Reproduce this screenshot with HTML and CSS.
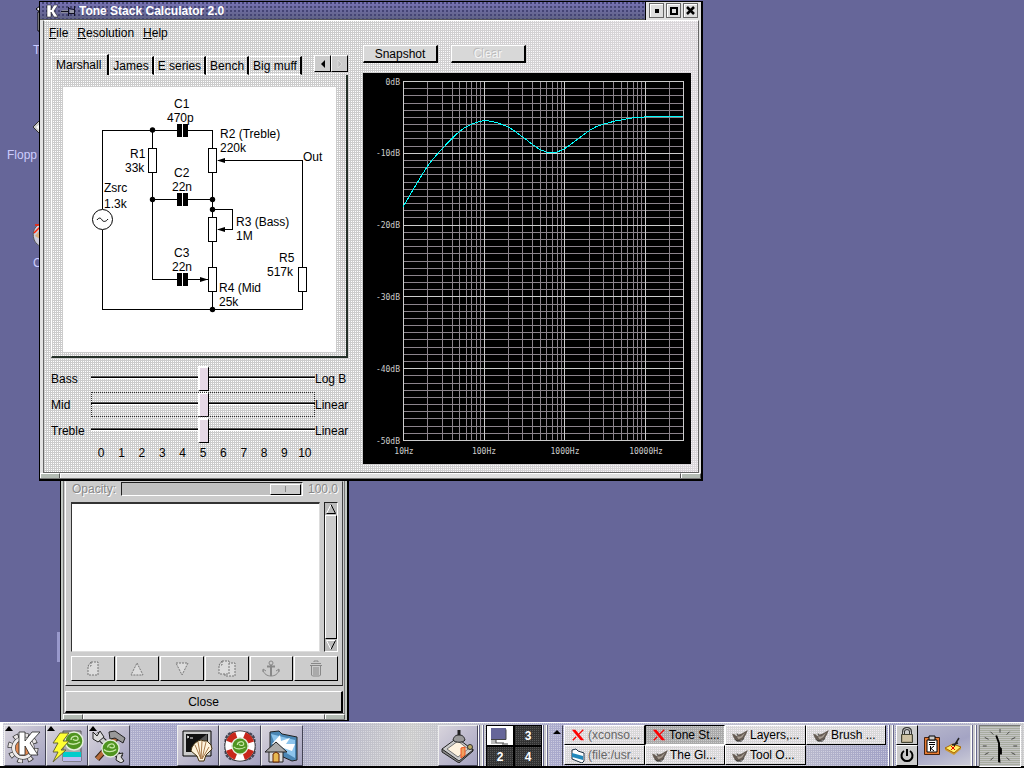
FILE: index.html
```html
<!DOCTYPE html>
<html lang="en">
<head>
<meta charset="utf-8">
<title>Tone Stack Calculator 2.0</title>
<link rel="stylesheet" href="styles.css">
</head>
<body>
<svg class="defs" width="0" height="0" aria-hidden="true">
  <defs>
    <symbol id="xlogo" viewBox="0 0 16 16"><path d="M1 2h4l10 12h-4z" fill="#f00"/><path d="M14 2L9 7M6 10l-4 4" stroke="#f00" stroke-width="1.5"/></symbol>
    <symbol id="gimp" viewBox="0 0 18 14"><path d="M1 5l3 1 2-2 2 2 3-1 7-4-2 5-3 5-4 2H6L3 10z" fill="#665c54"/><path d="M6 8l4 0 5-4-3 5-4 2z" fill="#a89e94"/><circle cx="6" cy="6" r="1.5" fill="#fff"/><path d="M6 5h1v2H6z" fill="#000"/><path d="M4 11l2 2h5l3-3" stroke="#222" fill="none"/></symbol>
    <symbol id="lizard" viewBox="0 0 20 20"><circle cx="10" cy="10" r="9" fill="#4f9420" stroke="#e4eedc" stroke-width="1.5"/><path d="M3 11c3 3 9 3 13 0M7 9c0-4 6-5 7-2s-4 3-5 1" fill="none" stroke="#c8e8a8" stroke-width="1.3"/></symbol>
    <symbol id="page" viewBox="0 0 12 15"><path d="M4 1h7v13H1V5zM4 1v4H1" fill="#dcdcdc" stroke="#777" stroke-dasharray="2 1"/></symbol>
  </defs>
</svg>
<main class="desktop">
  <div class="shortcut shortcut-trash">
    <svg width="5" height="30" viewBox="0 0 5 30"><path d="M5 2L1 5l4 3z" fill="#fff" stroke="#000"/><path d="M5 8H3v19h2" fill="#eee" stroke="#000"/></svg>
    <span>T</span>
  </div>
  <div class="shortcut shortcut-floppy">
    <svg width="8" height="16" viewBox="0 0 8 16"><path d="M8 1L1 8l7 7z" fill="#ccc" stroke="#333"/><path d="M8 5L4 8l4 4z" fill="#fff"/></svg>
    <span>Flopp</span>
  </div>
  <div class="shortcut shortcut-cd">
    <svg width="8" height="26" viewBox="0 0 8 26"><path d="M8 2C-1 5-1 20 8 24z" fill="#ccd" stroke="#555"/><path d="M8 3H3M8 5L2 11" stroke="#f20" stroke-width="1.5"/><path d="M8 8l-5 6 5 3z" fill="#d9b080"/></svg>
    <span>C</span>
  </div>
  <div class="sliver"></div>

  <section class="layers" aria-label="Layers">
    <div class="layers-body">
      <div class="layers-group">
        <div class="opacity">
          <label for="opacity">Opacity:</label>
          <input type="range" id="opacity" min="0" max="100" value="100" disabled>
          <output for="opacity">100.0</output>
        </div>
        <div class="list-row">
          <div class="list"></div>
          <div class="scroll">
            <svg width="12" height="12" viewBox="0 0 12 12"><path d="M1.500 10.500L6 1.500" stroke="#fff" fill="none"/><path d="M6 1.500l4.500 9h-9" stroke="#000" fill="none"/></svg>
            <div class="scroll-thumb"></div>
            <svg width="12" height="12" viewBox="0 0 12 12"><path d="M10 1.500H1.500L6 10.500" stroke="#fff" fill="none"/><path d="M10.500 1.500L6 10.500" stroke="#000" fill="none"/></svg>
          </div>
        </div>
        <div class="tools">
          <button aria-label="New layer" disabled><svg width="12" height="15"><use href="#page"/></svg></button>
          <button aria-label="Raise layer" disabled><svg width="14" height="14"><path d="M7 1l6 12H1z" fill="#dcdcdc" stroke="#777" stroke-dasharray="2 1"/></svg></button>
          <button aria-label="Lower layer" disabled><svg width="14" height="14"><path d="M1 1h12L7 13z" fill="#dcdcdc" stroke="#777" stroke-dasharray="2 1"/></svg></button>
          <button aria-label="Duplicate layer" disabled><svg width="18" height="17"><use href="#page" x="6" y="2" width="12" height="15"/><use href="#page" width="12" height="15"/></svg></button>
          <button aria-label="Anchor layer" disabled><svg width="18" height="17"><g fill="none" stroke="#888"><circle cx="9" cy="3" r="2"/><path d="M9 5v11M5 6.500h8" stroke-width="2"/><path d="M1 12V9l3 2M1 10c1 4 4 6 8 6s7-2 8-6M17 12V9l-3 2"/></g></svg></button>
          <button aria-label="Delete layer" disabled><svg width="14" height="17"><g fill="none" stroke="#888"><path d="M5 2V1h4v1M2 3.500h10M1 5.500h12M2.500 6v9l1 1h7l1-1V6"/><path d="M5 7v8M7 7v8M9 7v8"/></g></svg></button>
        </div>
      </div>
      <button class="close-btn">Close</button>
    </div>
    <div class="grip"><i></i><i></i><i></i></div>
  </section>

  <section class="window" aria-label="Tone Stack Calculator">
    <header class="titlebar">
      <svg width="12" height="14" viewBox="0 0 12 14"><path d="M1 1h4v5l3-5h4L8 7l4 6H8L5 8v5H1z" fill="#fff" stroke="#000" stroke-width=".5"/></svg>
      <svg width="15" height="12" viewBox="0 0 15 12"><path d="M0 7.500h7M1 5.500h6" stroke="#889" /><path d="M0 6.500h7M7.500 2v9M13.500 1v10M8 3.500l5 1M8 8.500h5" stroke="#112" fill="none"/><path d="M9 5h4v3H9z" fill="#99a"/></svg>
      <h1>Tone Stack Calculator 2.0</h1>
      <div class="win-controls">
        <button aria-label="Minimize"><svg width="11" height="11"><path d="M4 4h4v4H4z"/></svg></button>
        <button aria-label="Maximize"><svg width="11" height="11"><path d="M3 3h6v6H3z" fill="none" stroke="#000" stroke-width="2"/></svg></button>
        <button aria-label="Close"><svg width="11" height="11"><path d="M2 2l7 7M9 2L2 9" stroke="#000" stroke-width="2.500"/></svg></button>
      </div>
    </header>
    <div class="win-body">
      <nav class="menubar"><a href="#file"><u>F</u>ile</a><a href="#resolution"><u>R</u>esolution</a><a href="#help"><u>H</u>elp</a></nav>
      <div class="columns">
        <div class="left">
          <div class="tabs" role="tablist">
            <button role="tab" aria-selected="true">Marshall</button>
            <button role="tab">James</button>
            <button role="tab">E series</button>
            <button role="tab">Bench</button>
            <button role="tab">Big muff</button>
            <span class="tab-scroll">
              <button aria-label="Previous tabs"><svg width="6" height="8"><path d="M5 0v8L1 4z"/></svg></button>
              <button aria-label="Next tabs" disabled><svg width="6" height="8"><path d="M1 0v8l4-4z" fill="#bbb" stroke="#eee" stroke-width=".5"/></svg></button>
            </span>
          </div>
          <div class="panel">
            <svg class="schematic" viewBox="63 87 273 265" width="273" height="265" role="img" aria-label="Marshall tone stack circuit">
              <g fill="none" stroke="#000" shape-rendering="crispEdges">
                <path d="M102.500 209V130.500H177M188 130.500H212.500V309.500M102.500 230V309.500H302.500V160.500H218M152.500 130V279.500H177M188 279.500H208M152.500 199.500H177M188 199.500H212M212 209.500H232.500V229.500H218"/>
                <path fill="#fff" d="M148.500 148.500h8v24h-8zM208.500 148.500h8v24h-8zM208.500 217.500h8v24h-8zM208.500 267.500h8v24h-8zM298.500 267.500h8v24h-8z"/>
              </g>
              <circle cx="102.500" cy="219.500" r="10" fill="#fff" stroke="#000"/>
              <path d="M97 220c2-3 4-2 5 0s4 2 6-1" fill="none" stroke="#000"/>
              <path d="M177 124h5v13h-5zM183 124h5v13h-5zM177 193h5v13h-5zM183 193h5v13h-5zM177 273h5v13h-5zM183 273h5v13h-5z"/>
              <path d="M217 160.500l8-2.500v5zM217 229.500l8-2.500v5zM208 279.500l-8-2.500v5z"/>
              <g><circle cx="152.500" cy="130" r="2.700"/><circle cx="152.500" cy="199.500" r="2.700"/><circle cx="212.500" cy="199.500" r="2.700"/><circle cx="212.500" cy="209.500" r="2.700"/><circle cx="212.500" cy="309.500" r="2.700"/></g>
              <g class="part">
                <text x="174" y="108">C1</text><text x="167" y="122">470p</text>
                <text x="220" y="138">R2 (Treble)</text><text x="220" y="152">220k</text>
                <text x="130" y="158">R1</text><text x="125" y="172">33k</text>
                <text x="303" y="161">Out</text>
                <text x="174" y="177">C2</text><text x="172" y="191">22n</text>
                <text x="104" y="192">Zsrc</text><text x="104" y="208">1.3k</text>
                <text x="236" y="226">R3 (Bass)</text><text x="236" y="240">1M</text>
                <text x="174" y="257">C3</text><text x="172" y="271">22n</text>
                <text x="279" y="262">R5</text><text x="267" y="276">517k</text>
                <text x="219" y="292">R4 (Mid</text><text x="219" y="306">25k</text>
              </g>
            </svg>
          </div>
          <div class="sliders">
            <label for="bass">Bass</label><input type="range" id="bass" min="0" max="10" value="5"><span>Log B</span>
            <label for="mid">Mid</label><input class="focused" type="range" id="mid" min="0" max="10" value="5"><span>Linear</span>
            <label for="treble">Treble</label><input type="range" id="treble" min="0" max="10" value="5"><span>Linear</span>
            <div class="ticks"><span>0</span><span>1</span><span>2</span><span>3</span><span>4</span><span>5</span><span>6</span><span>7</span><span>8</span><span>9</span><span>10</span></div>
          </div>
        </div>
        <div class="right">
          <div class="actions"><button>Snapshot</button><button disabled>Clear</button></div>
          <svg class="graph" viewBox="363 73 328 391" role="img" aria-label="Frequency response">
            <g fill="none" shape-rendering="crispEdges">
              <path id="minor" stroke="#8c848c"/>
              <path id="major" stroke="#ccc"/>
              <path id="curve" stroke="#0ff"/>
            </g>
            <g class="axis">
              <g text-anchor="end"><text x="400" y="85">0dB</text><text x="400" y="156">-10dB</text><text x="400" y="228">-20dB</text><text x="400" y="300">-30dB</text><text x="400" y="372">-40dB</text><text x="400" y="444">-50dB</text></g>
              <g text-anchor="middle"><text x="404" y="454">10Hz</text><text x="484" y="454">100Hz</text><text x="565" y="454">1000Hz</text><text x="646" y="454">10000Hz</text></g>
            </g>
          </svg>
        </div>
      </div>
    </div>
    <div class="grip"><i></i><i></i><i></i></div>
  </section>
</main>

<footer class="taskbar">
  <button class="launch" aria-label="K menu"><svg width="36" height="34" viewBox="0 0 36 34"><circle cx="16" cy="19" r="12" fill="none" stroke="#333" stroke-width="7" stroke-dasharray="5 4.420"/><circle cx="16" cy="19" r="12" fill="none" stroke="#e8e4e4" stroke-width="5.500" stroke-dasharray="3.600 5.820" stroke-dashoffset="-.7"/><circle cx="16" cy="19" r="9.500" fill="#e08850" stroke="#333" stroke-width="4"/><circle cx="16" cy="19" r="9.500" fill="none" stroke="#f0ecec" stroke-width="3"/><path d="M12 3h6v9l7-9h8L23 14l8 12h-8l-5-9v9h-6z" fill="#fff" stroke="#222" stroke-width=".8"/></svg></button>
  <button class="launch" aria-label="SuSE menu"><svg width="36" height="34" viewBox="0 0 36 34"><path d="M14 2h18v30H14z" fill="#aaa" stroke="#555"/><path d="M14 23h18v5H14z" fill="#0cc"/><path d="M14 28h18v4H14z" fill="#bbe"/><use href="#lizard" x="15" y="2" width="20" height="20"/><path d="M11 4h9l-6 8h6l-8 9h5L4 33l5-10H4l5-9H4z" fill="#ff3" stroke="#663"/></svg></button>
  <button class="launch" aria-label="Configuration"><svg width="36" height="34" viewBox="0 0 36 34"><path d="M6 30L26 8" stroke="#321" stroke-width="6"/><path d="M6 30L26 8" stroke="#b76b3c" stroke-width="4"/><path d="M18 3l6-1 10 7-2 5-8-5-5 1z" fill="#999" stroke="#222"/><path d="M5 5l25 24" stroke="#222" stroke-width="6"/><path d="M5 5l25 24" stroke="#ccc" stroke-width="4"/><path d="M2 3l4 4 3-5 4 6-6 5-5-3zM33 32l-3-4 2-4-6 1-1 6 5 3z" fill="#ddd" stroke="#222"/><use href="#lizard" x="10" y="10" width="19" height="19"/></svg></button>
  <span class="spacer-s"></span>
  <button class="launch plain" aria-label="Terminal"><svg width="36" height="34" viewBox="0 0 36 34"><path d="M3 2h28v25H3z" fill="#ccc" stroke="#000"/><path d="M6 5h22v18H6z" fill="#111"/><path d="M7 7l2 1-2 1M10 9h3" stroke="#fff" fill="none"/><path d="M18 12L27 5v8z" fill="#555"/><path d="M12 18l3-4 3-2 3-1 3 1 3 0 4 4 1 4-6 6-2 6h-5l-2-5-6-5z" fill="#fff4dc" stroke="#431"/><path d="M21 30l-6-14M21 30l-3-17M21 30l1-18M22 30l4-17M22 30l7-12" stroke="#a97b4c"/></svg></button>
  <button class="launch plain" aria-label="Help"><svg width="36" height="34" viewBox="0 0 36 34"><rect x="3.500" y="3.500" width="29" height="27" rx="8" fill="none" stroke="#445" stroke-width="2" stroke-dasharray="3 1"/><circle cx="18" cy="17" r="11.500" fill="none" stroke="#222" stroke-width="8"/><circle cx="18" cy="17" r="11.500" fill="none" stroke="#fff" stroke-width="6.500"/><circle cx="18" cy="17" r="11.500" fill="none" stroke="#c8281c" stroke-width="6.500" stroke-dasharray="10 8.060" stroke-dashoffset="-4"/><use href="#lizard" x="9" y="8" width="18" height="18"/></svg></button>
  <button class="launch plain" aria-label="Home"><svg width="36" height="34" viewBox="0 0 36 34"><path d="M6 3l9-1 3 3 15 3v23l-5 1L6 22z" fill="#4a86b4" stroke="#222"/><path d="M7 5l24 6v18L12 18z" fill="#8cc4ec"/><path d="M8 15l8-9 1 6 9-3-4 6 9 0-3 7z" fill="#fff"/><path d="M5 21h14v12H5z" fill="#ddd" stroke="#222"/><path d="M1 23L12 13l11 10z" fill="#aaa" stroke="#222"/><path d="M9 33v-8l3-2 3 2v8z" fill="#e8b850" stroke="#620"/></svg></button>
  <span class="spacer"></span>
  <button class="launch plain narrow" aria-label="Draw"><svg width="36" height="34" viewBox="0 0 36 34"><path d="M2 20v3l17 11 14-12v-2z" fill="#888" stroke="#222"/><path d="M2 20L17 9l16 12-14 11z" fill="#ccc" stroke="#222"/><path d="M7 20l11-8 10 8-10 8z" fill="#fff3df" stroke="#777"/><path d="M21 19l4-1v8l-4 3z" fill="#f0a060" stroke="#e52"/><path d="M19 1v9" stroke="#222" stroke-width="3"/><path d="M13 11c1-4 3-5 6-5s5 1 6 5c-2 3-10 3-12 0z" fill="#999" stroke="#222"/><circle cx="30" cy="18" r="2.500" fill="#ba6" stroke="#333"/></svg></button>
  <span class="handle"></span>
  <div class="pager">
    <button class="current" aria-label="Desktop 1"><svg width="25" height="18"><path d="M3 1h15v11H3z" fill="#669"/><path d="M3 12h5v5H3z" fill="#bbb"/><path d="M3 12.500h15v-10M8 12v4h8M14 17h6" stroke="#444" fill="none"/></svg></button>
    <button>3</button><button>2</button><button>4</button>
  </div>
  <span class="handle"></span>
  <button class="task-menu" aria-label="Window list"><svg width="8" height="5"><path d="M4 0l4 4H0z"/></svg></button>
  <div class="tasks">
    <button class="hidden-task"><svg width="16" height="14"><use href="#xlogo"/></svg>(xconso...</button>
    <button class="active"><svg width="16" height="14"><use href="#xlogo"/></svg>Tone St...</button>
    <button><svg width="17" height="13"><use href="#gimp"/></svg>Layers,...</button>
    <button><svg width="17" height="13"><use href="#gimp"/></svg>Brush ...</button>
    <button class="hidden-task"><svg width="16" height="15"><path d="M2 2l4-1 2 2 6 2v8l-2 2-10-4z" fill="#fff" stroke="#234"/><path d="M2 5l11 3v4L2 9z" fill="#28b"/></svg>(file:/usr...</button>
    <button><svg width="17" height="13"><use href="#gimp"/></svg>The Gl...</button>
    <button><svg width="17" height="13"><use href="#gimp"/></svg>Tool O...</button>
  </div>
  <span class="handle"></span>
  <div class="session">
    <button aria-label="Lock"><svg width="14" height="17"><path d="M3.500 8V4.500q0-3 3.500-3t3.500 3V8" fill="none" stroke="#333" stroke-width="3"/><path d="M3.500 8V4.500q0-3 3.500-3t3.500 3V8" fill="none" stroke="#ccc"/><path d="M1.500 7.500h11v8h-11z" fill="#b3a68a" stroke="#443"/><path d="M3 9h8M3 11h8M3 13h8" stroke="#e8dcbc"/></svg></button>
    <button aria-label="Log out"><svg width="14" height="15"><path d="M4 3a5.500 5.500 0 1 0 6 0M7 1v7" fill="none" stroke="#000" stroke-width="2"/></svg></button>
  </div>
  <div class="tray">
    <svg width="18" height="21"><path d="M1.500 2.500h15v17h-15z" fill="#e77b32" stroke="#421"/><path d="M4 5h10v12H4z" fill="#fff" stroke="#000"/><path d="M6 1h6v4H6z" fill="#ccc" stroke="#000"/><path d="M6 7.500h6M6 9.500h6M7.500 11v5M11 11l-3 2.500 3 2.500" stroke="#000" fill="none"/></svg>
    <svg width="18" height="18"><path d="M1 11v2l9 5 7-6v-2z" fill="#c93"/><path d="M1 11l8-4 8 3-7 6z" fill="#fe6" stroke="#a60"/><path d="M7 9l4 4M11 9l-4 4" stroke="#e00"/><path d="M10 9l5-8M8 8l6-2" stroke="#222" stroke-width="1.500"/></svg>
  </div>
  <span class="handle"></span>
  <svg class="clock" viewBox="0 0 42 42" width="42" height="42" role="img" aria-label="Clock">
    <g stroke="#444"><path d="M21 3v4M21 35v4M3 21h4M35 21h4M11 6l3 3M31 6l-3 3M5 12l4 2M37 12l-4 2M5 30l4-2M37 30l-4-2M11 36l3-3M31 36l-3-3"/></g>
    <path d="M17 10l3 8v20M20 22l2 2v6" fill="none" stroke="#000" stroke-width="2"/>
  </svg>
</footer>
<script src="graph.js"></script>
</body>
</html>
```
FILE: styles.css
```css
:root {
  --face: #ccc;
  --desk: #666699;
  --dots: conic-gradient(#fff 25%, transparent 0);
}
* { box-sizing: border-box; }
body {
  margin: 0;
  height: 100vh;
  display: flex;
  flex-direction: column;
  overflow: hidden;
  background: var(--desk);
  font: 12px/14px "Liberation Sans", Arial, sans-serif;
  color: #000;
}
button, input { font: inherit; color: inherit; margin: 0; padding: 0; }
button {
  display: flex;
  align-items: center;
  justify-content: center;
  border: 1px solid;
  border-color: #fff #000 #000 #fff;
  border-radius: 0;
  background: var(--face);
  white-space: nowrap;
}
svg { display: block; flex: none; }
.defs { position: absolute; }
.desktop { position: relative; flex: 1; min-height: 0; }

/* desktop shortcuts */
.shortcut {
  position: absolute;
  display: flex;
  flex-direction: column;
  align-items: flex-start;
  gap: 9px;
  color: #ccccff;
}
.shortcut svg { align-self: flex-end; }
.shortcut-trash { left: 33px; top: 4px; width: 7px; }
.shortcut-floppy { left: 7px; top: 119px; width: 33px; gap: 13px; }
.shortcut-cd { left: 33px; top: 222px; width: 7px; gap: 8px; }
.sliver { position: absolute; left: 57px; top: 632px; width: 3px; height: 30px; background: #9999cc; }

/* calculator window */
.window {
  position: absolute;
  left: 39px;
  top: 1px;
  width: 664px;
  border: 1px solid #000;
  border-right-width: 2px;
  border-bottom-width: 2px;
  background: #e2e2e2;
}
.titlebar {
  display: flex;
  align-items: center;
  height: 18px;
  padding-left: 6px;
  gap: 3px;
  background-color: #66669c;
  background-image: conic-gradient(#444474 25%, transparent 0), linear-gradient(#7772b4, #5f6285);
  background-size: 4px 4px, auto;
  border-bottom: 1px solid #555;
}
.titlebar h1 {
  margin: 0;
  font: bold 12px/16px "Liberation Sans", Arial, sans-serif;
  color: #fff;
}
.win-controls {
  display: flex;
  align-items: center;
  gap: 2px;
  height: 18px;
  margin-left: auto;
  padding: 0 3px;
  background: #e0e0e0;
  border-left: 1px solid #000;
}
.win-controls button { width: 15px; height: 15px; border-color: #666; background: #ddd; box-shadow: inset 1px 1px #fff; }
.win-body {
  margin: 0 2px 0 3px;
  padding: 1px 7px 8px 7px;
  border: 1px solid #666;
  border-top-color: #fff;
  background-color: #ccc;
  background-image: linear-gradient(90deg, transparent 45%, #ece4ec70 100%), var(--dots);
  background-size: auto, 2px 2px;
}
.menubar { display: flex; gap: 9px; height: 21px; align-items: center; margin-left: -2px; }
.menubar a { color: #000; text-decoration: none; }
.columns { display: flex; gap: 12px; }
.left { width: 300px; padding-top: 11px; }
.right { flex: 1; padding-top: 2px; }
.tabs { display: flex; height: 21px; align-items: flex-end; padding-right: 3px; }
.tabs > button {
  height: 19px;
  padding: 0 3px;
  border-width: 1px 2px 1px 1px;
  border-bottom-color: #fff;
  background: transparent;
}
.tabs > button[aria-selected] { height: 21px; padding: 0 6px 0 4px; border-bottom: 0; }
.tab-scroll { display: flex; margin-left: auto; align-self: flex-start; }
.tab-scroll button { width: 17px; height: 17px; margin-top: 1px; }
.panel {
  margin-right: 3px;
  padding: 12px 10px 4px 11px;
  border: solid;
  border-width: 0 2px 2px 1px;
  border-color: #fff #243028 #243028 #fff;
}
.schematic { width: 100%; height: auto; background: #fff; }
.part { font: 12px "Liberation Sans", Arial, sans-serif; }
.sliders {
  display: grid;
  grid-template-columns: 40px 1fr 36px;
  grid-template-rows: 26px 26px 26px 20px;
  align-items: center;
  padding-top: 7px;
}
.sliders label, .sliders > span { padding-top: 2px; white-space: nowrap; }
.sliders input {
  -webkit-appearance: none;
  appearance: none;
  width: 100%;
  height: 25px;
  background: linear-gradient(#555 1px, #000 1px 2px, #fff 2px) 0 10px / 100% 3px no-repeat;
}
.sliders input.focused { outline: 1px dotted #333; outline-offset: -1px; }
.sliders input::-webkit-slider-thumb {
  -webkit-appearance: none;
  width: 11px;
  height: 25px;
  border: 1px solid;
  border-width: 2px 1px 1px 2px;
  border-color: #fff #000 #000 #fff;
  background: #e6d8e6;
}
.ticks { grid-column: 2; display: grid; grid-template-columns: repeat(11, 1fr); text-align: center; }
.actions { display: flex; gap: 13px; padding-bottom: 10px; }
.actions button { width: 75px; height: 18px; border-width: 1px 2px 2px 1px; background-color: #d8d8d8; }
.actions button:disabled { color: #f4f4f4; text-shadow: -1px -1px #bbb; }
.graph { width: 100%; height: auto; background: #000; }
.axis { fill: #ccc; font: 8px "DejaVu Sans Mono", monospace; }
.grip { display: flex; height: 6px; background: #ccc; border-bottom: 1px solid #777; }
.grip i { width: 20px; border-top: 1px solid #fff; border-left: 1px solid #fff; border-right: 1px solid #555; background: #b4bcb4; }
.grip i:nth-child(2) { flex: 1; background: #e0e0e0; }

/* layers window */
.layers {
  position: absolute;
  left: 60px;
  bottom: 1px;
  width: 289px;
  padding: 1px 2px 0;
  border: 1px solid #000;
  border-right-width: 2px;
  background: #c4cac4;
}
.layers-body { background: var(--face); border: 1px solid #777; padding: 30px 1px 0; }
.layers-group {
  display: flex;
  flex-direction: column;
  padding: 0 4px 4px 5px;
  border: 1px solid;
  border-color: transparent #444 #222 #fff;
}
.opacity { display: flex; align-items: center; gap: 5px; height: 14px; margin-bottom: 6px; color: #888; text-shadow: 1px 1px #fff; }
.opacity label { padding-left: 1px; }
.opacity input {
  -webkit-appearance: none;
  appearance: none;
  flex: 1;
  min-width: 0;
  height: 14px;
  padding: 1px;
  border: 1px solid;
  border-color: #222 #fff #fff #222;
  background: #c0c0c0;
}
.opacity input::-webkit-slider-thumb {
  -webkit-appearance: none;
  width: 31px;
  height: 11px;
  border: 1px solid;
  border-color: #fff #000 #000 #fff;
  background: linear-gradient(#888, #888) center / 1px 6px no-repeat #ccc;
}
.list-row { display: flex; gap: 4px; height: 150px; margin-bottom: 4px; }
.list { flex: 1; background: #fff; border: 2px solid; border-color: #333 #ddd #ddd #333; border-width: 2px 1px 1px 1px; }
.scroll { width: 14px; display: flex; flex-direction: column; background: #bbb; border: 1px solid; border-color: #222 #fff #fff #222; }
.scroll-thumb { flex: 1; background: var(--face); border: 1px solid; border-color: #fff #000 #000 #fff; }
.tools { display: grid; grid-template-columns: repeat(6, 1fr); gap: 1px; }
.tools button { height: 25px; }
.close-btn { width: 100%; height: 22px; margin-top: 5px; border-width: 1px 2px 2px 1px; }

/* taskbar */
.taskbar {
  display: flex;
  height: 46px;
  padding: 2px 3px 2px 4px;
  border-top: 1px solid #fff;
  background-color: #b4b2cc;
  background-image: conic-gradient(#ffffff60 25%, transparent 0), linear-gradient(100deg, #c8c8d4, #9a9ac4 22%, #ccc 40%, #a8a8cc 55%, #c4c4d0 75%, #9c9cc4 88%, #ccc);
  background-size: 2px 2px, auto;
  box-shadow: inset 0 -2px #000, inset 3px 0 #fff;
}
.launch {
  position: relative;
  flex: none;
  width: 42px;
  height: 41px;
  background: linear-gradient(135deg, #d8d4dc, #a4a2c0);
  border-color: #eee #445 #445 #eee;
}
.launch.narrow { width: 40px; }
.launch:not(.plain)::before {
  content: "";
  position: absolute;
  left: 0;
  top: 0;
  border: 4px solid transparent;
  border-top: 0;
  border-bottom: 5px solid #000;
}
.spacer-s { width: 47px; }
.spacer { flex: 1; }
.handle { flex: none; width: 7px; height: 41px; margin: 0 1px 0 0; background: repeating-linear-gradient(90deg, #fff 0 1px, #66668c 1px 2px, #ccc 2px 4px); }
.pager { flex: none; display: grid; grid-template-columns: 28px 28px; grid-template-rows: 21px 21px; }
.pager button {
  background: #333 conic-gradient(#555 25%, transparent 0) 0 0 / 2px 2px;
  color: #fff;
  font-weight: bold;
  border: 1px solid #000;
}
.pager .current { background: #fff; }
.task-menu { width: 13px; height: 41px; flex: none; align-items: flex-start; padding-top: 4px; border-color: transparent #445 transparent transparent; background: transparent; }
.tasks { flex: none; display: grid; grid-template-columns: repeat(2, 81px 80px); grid-template-rows: 20px 20px; margin: 0 2px 0 1px; }
.tasks button { justify-content: flex-start; gap: 2px; padding-left: 5px; background: #d8d8d8 conic-gradient(#f4ecf4 25%, transparent 0) 0 0 / 2px 2px; }
.tasks .active { background: #aaa conic-gradient(#ccc 25%, transparent 0) 0 0 / 2px 2px; border-color: #000 #fff #fff #000; }
.tasks .hidden-task { color: #666; }
.session { flex: none; display: grid; width: 22px; grid-template-rows: 20px 21px; }
.tray { flex: none; display: flex; align-items: center; gap: 3px; width: 53px; height: 41px; padding-left: 5px; border: 1px solid #ddd; border-left: 0; background: linear-gradient(160deg, #b8b8cc, #a4a4c4, #ccccd8); }
.clock { background: repeating-linear-gradient(#a8aca0 0 1px, #c4c4c4 1px 2px); border: 1px solid #777; border-color: #777 #fff #fff #777; }
```
FILE: graph.js
```js
// Logarithmic frequency grid (10 Hz up to about 30 kHz) against a 0 to -50 dB scale.
const plot = { left: 403, top: 81, width: 280, height: 359, decade: 80.7 };
let minor = "";
let major = `M${plot.left + plot.width + 0.5} ${plot.top}v${plot.height}`;

for (let db = 0; db <= 50; db++) {
  const y = plot.top + Math.round(db * plot.height / 50) + 0.5;
  const line = `M${plot.left} ${y}h${plot.width + 1}`;
  if (db % 10 === 0) major += line; else minor += line;
}
for (let d = 0; d < 4; d++) {
  for (let n = 1; n < 10; n++) {
    const offset = (d + Math.log10(n)) * plot.decade;
    if (offset > plot.width - 5) break;
    const line = `M${plot.left + Math.round(offset) + 0.5} ${plot.top}v${plot.height}`;
    if (n === 1) major += line; else minor += line;
  }
}

// Response samples, joined by a Catmull-Rom spline.
const pts = [[403, 207], [427, 167], [442, 149], [460, 131], [472, 124], [487, 120.7], [508, 127], [522, 136.5],
  [540, 149.5], [552, 152.8], [564, 149], [588, 131.5], [602, 124.5], [632, 118], [658, 116.6], [683, 116.5]];
let curve = `M${pts[0]}`;
for (let i = 0; i < pts.length - 1; i++) {
  const a = pts[i - 1] || pts[i], b = pts[i], c = pts[i + 1], e = pts[i + 2] || c;
  curve += `C${b[0] + (c[0] - a[0]) / 6} ${b[1] + (c[1] - a[1]) / 6} ${c[0] - (e[0] - b[0]) / 6} ${c[1] - (e[1] - b[1]) / 6} ${c}`;
}

document.getElementById("minor").setAttribute("d", minor);
document.getElementById("major").setAttribute("d", major);
document.getElementById("curve").setAttribute("d", curve);
```
